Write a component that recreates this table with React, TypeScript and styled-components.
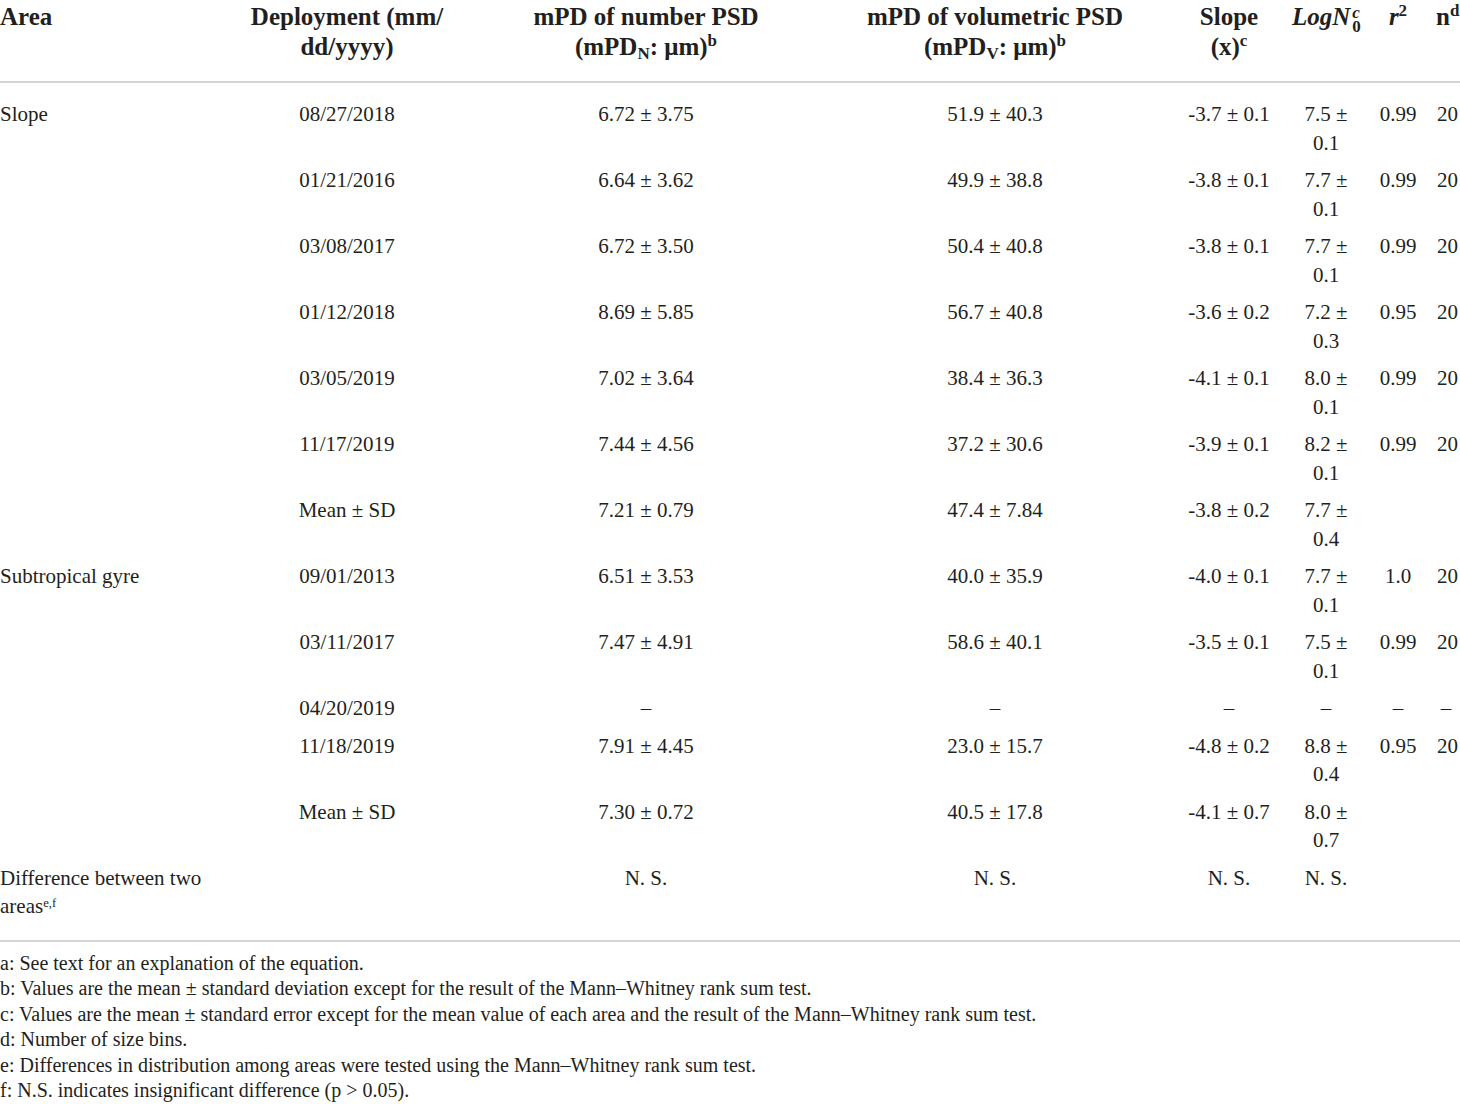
import React from "react";
import styled, { createGlobalStyle } from "styled-components";

const GlobalStyle = createGlobalStyle`
  body {
    margin: 0;
    background: #ffffff;
    color: #231f20;
    font-family: "Liberation Serif", "Times New Roman", serif;
  }
`;

type Row = {
  area?: string;
  date: string;
  mpdN: string;
  mpdV: string;
  slope: string;
  logN: string;
  r2: string;
  n: string;
};

const rows: Row[] = [
  { area: "Slope", date: "08/27/2018", mpdN: "6.72 ± 3.75", mpdV: "51.9 ± 40.3", slope: "-3.7 ± 0.1", logN: "7.5 ± 0.1", r2: "0.99", n: "20" },
  { date: "01/21/2016", mpdN: "6.64 ± 3.62", mpdV: "49.9 ± 38.8", slope: "-3.8 ± 0.1", logN: "7.7 ± 0.1", r2: "0.99", n: "20" },
  { date: "03/08/2017", mpdN: "6.72 ± 3.50", mpdV: "50.4 ± 40.8", slope: "-3.8 ± 0.1", logN: "7.7 ± 0.1", r2: "0.99", n: "20" },
  { date: "01/12/2018", mpdN: "8.69 ± 5.85", mpdV: "56.7 ± 40.8", slope: "-3.6 ± 0.2", logN: "7.2 ± 0.3", r2: "0.95", n: "20" },
  { date: "03/05/2019", mpdN: "7.02 ± 3.64", mpdV: "38.4 ± 36.3", slope: "-4.1 ± 0.1", logN: "8.0 ± 0.1", r2: "0.99", n: "20" },
  { date: "11/17/2019", mpdN: "7.44 ± 4.56", mpdV: "37.2 ± 30.6", slope: "-3.9 ± 0.1", logN: "8.2 ± 0.1", r2: "0.99", n: "20" },
  { date: "Mean ± SD", mpdN: "7.21 ± 0.79", mpdV: "47.4 ± 7.84", slope: "-3.8 ± 0.2", logN: "7.7 ± 0.4", r2: "", n: "" },
  { area: "Subtropical gyre", date: "09/01/2013", mpdN: "6.51 ± 3.53", mpdV: "40.0 ± 35.9", slope: "-4.0 ± 0.1", logN: "7.7 ± 0.1", r2: "1.0", n: "20" },
  { date: "03/11/2017", mpdN: "7.47 ± 4.91", mpdV: "58.6 ± 40.1", slope: "-3.5 ± 0.1", logN: "7.5 ± 0.1", r2: "0.99", n: "20" },
  { date: "04/20/2019", mpdN: "–", mpdV: "–", slope: "–", logN: "–", r2: "–", n: "–" },
  { date: "11/18/2019", mpdN: "7.91 ± 4.45", mpdV: "23.0 ± 15.7", slope: "-4.8 ± 0.2", logN: "8.8 ± 0.4", r2: "0.95", n: "20" },
  { date: "Mean ± SD", mpdN: "7.30 ± 0.72", mpdV: "40.5 ± 17.8", slope: "-4.1 ± 0.7", logN: "8.0 ± 0.7", r2: "", n: "" },
];

const notes = [
  "a: See text for an explanation of the equation.",
  "b: Values are the mean ± standard deviation except for the result of the Mann–Whitney rank sum test.",
  "c: Values are the mean ± standard error except for the mean value of each area and the result of the Mann–Whitney rank sum test.",
  "d: Number of size bins.",
  "e: Differences in distribution among areas were tested using the Mann–Whitney rank sum test.",
  "f: N.S. indicates insignificant difference (p > 0.05).",
];

const App: React.FC = () => {
  return (
    <>
      <GlobalStyle />
      <Page>
        <Table>
          <colgroup>
            <col style={{ width: 222 }} />
            <col style={{ width: 250 }} />
            <col style={{ width: 348 }} />
            <col style={{ width: 350 }} />
            <col style={{ width: 118 }} />
            <col style={{ width: 76 }} />
            <col style={{ width: 68 }} />
            <col style={{ width: 28 }} />
          </colgroup>
          <thead>
            <tr>
              <Th align="left">Area</Th>
              <Th>
                Deployment (mm/
                <br />
                dd/yyyy)
              </Th>
              <Th>
                mPD of number PSD
                <br />
                (mPD<Sub>N</Sub>: μm)<Sup>b</Sup>
              </Th>
              <Th>
                mPD of volumetric PSD
                <br />
                (mPD<Sub>V</Sub>: μm)<Sup>b</Sup>
              </Th>
              <Th>
                Slope
                <br />
                (x)<Sup>c</Sup>
              </Th>
              <Th>
                <Ital>LogN</Ital>
                <Stack>
                  <StackTop>c</StackTop>
                  <span>0</span>
                </Stack>
              </Th>
              <Th>
                <Ital>r</Ital>
                <Sup>2</Sup>
              </Th>
              <Th>
                n<Sup>d</Sup>
              </Th>
            </tr>
          </thead>
          <tbody>
            {rows.map((r, i) => (
              <Tr key={i} first={i === 0}>
                <Td align="left">{r.area ?? ""}</Td>
                <Td>{r.date}</Td>
                <Td>{r.mpdN}</Td>
                <Td>{r.mpdV}</Td>
                <Td>{r.slope}</Td>
                <Td>{r.logN}</Td>
                <Td>{r.r2}</Td>
                <Td>{r.n}</Td>
              </Tr>
            ))}
            <Tr last>
              <Td align="left">
                Difference between two areas<Sup small>e,f</Sup>
              </Td>
              <Td></Td>
              <Td>N. S.</Td>
              <Td>N. S.</Td>
              <Td>N. S.</Td>
              <Td>N. S.</Td>
              <Td></Td>
              <Td></Td>
            </Tr>
          </tbody>
        </Table>
        <Notes>
          {notes.map((n) => (
            <Note key={n}>{n}</Note>
          ))}
        </Notes>
      </Page>
    </>
  );
};
export default App;

const Page = styled.div`
  width: 1460px;
`;

const Table = styled.table`
  width: 1460px;
  table-layout: fixed;
  border-collapse: collapse;
  border-bottom: 2px solid #d4d4d4;
`;

const Th = styled.th<{ align?: string }>`
  text-align: ${(p) => p.align || "center"};
  vertical-align: top;
  font-weight: bold;
  font-size: 25px;
  line-height: 30px;
  padding: 2px ${(p) => (p.align === "left" ? "0" : "4px")} 19px;
  border-bottom: 2px solid #d4d4d4;
  white-space: nowrap;
`;

const Tr = styled.tr<{ first?: boolean; last?: boolean }>`
  td {
    padding-top: ${(p) => (p.first ? "17px" : "4.5px")};
    padding-bottom: ${(p) => (p.last ? "19px" : "4.5px")};
  }
`;

const Td = styled.td<{ align?: string }>`
  text-align: ${(p) => p.align || "center"};
  vertical-align: top;
  font-size: 21px;
  line-height: 28.5px;
  padding-left: ${(p) => (p.align === "left" ? "0" : "5px")};
  padding-right: 5px;
`;

const Sup = styled.sup<{ small?: boolean }>`
  font-size: ${(p) => (p.small ? "0.6em" : "0.68em")};
  line-height: 0;
  vertical-align: ${(p) => (p.small ? "0.45em" : "0.55em")};
`;

const Sub = styled.sub`
  font-size: 0.68em;
  line-height: 0;
  vertical-align: -0.25em;
`;

const Ital = styled.i`
  font-style: italic;
`;

const Stack = styled.span`
  display: inline-flex;
  flex-direction: column;
  align-items: flex-start;
  vertical-align: 0.42em;
  font-size: 0.68em;
  line-height: 0.85;
  margin-left: 2px;
`;

const StackTop = styled.span`
  font-style: italic;
`;

const Notes = styled.div`
  padding-top: 9px;
`;

const Note = styled.div`
  font-size: 20px;
  line-height: 25.6px;
`;
